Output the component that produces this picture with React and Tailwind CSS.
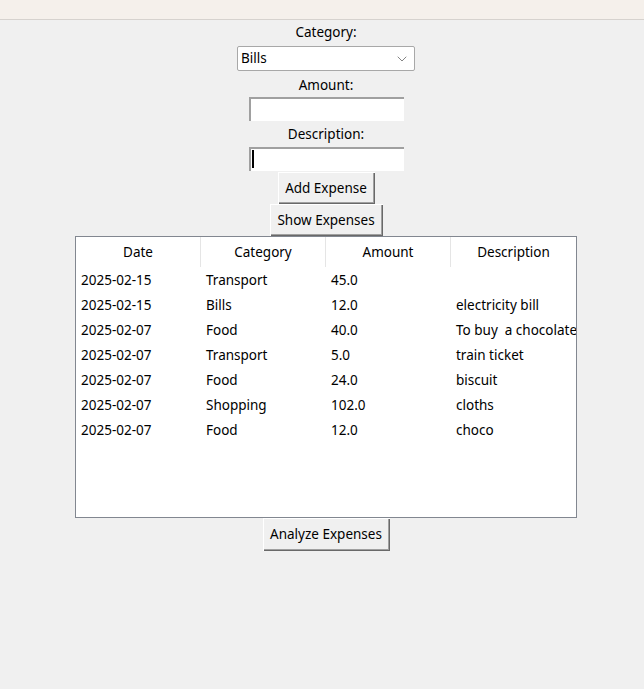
import { ChevronDown } from "lucide-react";

const rows = [
  ["2025-02-15", "Transport", "45.0", ""],
  ["2025-02-15", "Bills", "12.0", "electricity bill"],
  ["2025-02-07", "Food", "40.0", "To buy  a chocolate"],
  ["2025-02-07", "Transport", "5.0", "train ticket"],
  ["2025-02-07", "Food", "24.0", "biscuit"],
  ["2025-02-07", "Shopping", "102.0", "cloths"],
  ["2025-02-07", "Food", "12.0", "choco"],
];

const raised =
  "bg-[#f0f0f0] shadow-[inset_1px_1px_0_#ffffff,inset_-1px_-1px_0_#696969,inset_-2px_-2px_0_#a0a0a0] text-[13.5px] text-black";

function Entry({ caret }) {
  return (
    <div className="relative h-[24px] w-[155px] bg-white border-t-2 border-l-2 border-[#a0a0a0] border-r-0 border-b-0">
      {caret && <div className="absolute left-[1px] top-[1px] h-[18px] w-[2px] bg-black" />}
    </div>
  );
}

export default function App() {
  return (
    <div
      className="h-[689px] w-[644px] overflow-hidden bg-[#f0f0f0] text-black"
      style={{ fontFamily: '"Noto Sans", "Open Sans", sans-serif' }}
    >
      {/* window title strip */}
      <div className="h-[20px] bg-[#f5f0eb] border-b border-[#d6d2ce]" />

      <div className="flex flex-col items-center pl-[8px]">
        <div className="mt-[2px] h-[20px] leading-[20px] text-[13.5px]">Category:</div>
        <div className="mt-[4px] flex h-[25px] w-[178px] items-center justify-between rounded-[2px] border border-[#a8a8a8] bg-white pl-[3px] pr-[4px] text-[13.5px]">
          <span>Bills</span>
          <ChevronDown size={16} strokeWidth={1.3} className="text-[#707070]" />
        </div>

        <div className="mt-[4px] h-[20px] leading-[20px] text-[13.5px]">Amount:</div>
        <div className="mt-[2px]">
          <Entry />
        </div>

        <div className="mt-[3px] h-[20px] leading-[20px] text-[13.5px]">Description:</div>
        <div className="mt-[3px]">
          <Entry caret />
        </div>

        <button className={`mt-[1px] h-[32px] w-[97px] ${raised}`}>Add Expense</button>
        <button className={`h-[32px] w-[113px] ${raised}`}>Show Expenses</button>

        {/* treeview */}
        <div className="h-[282px] w-[502px] overflow-hidden border border-[#828790] bg-white text-[13.5px]">
          <div className="grid h-[30px] grid-cols-[124px_125px_125px_126px]">
            {["Date", "Category", "Amount", "Description"].map((h, i) => (
              <div
                key={h}
                className={`flex items-center justify-center ${i > 0 ? "border-l border-[#e5e5e5]" : ""}`}
              >
                {h}
              </div>
            ))}
          </div>
          <div className="pt-[1px]">
            {rows.map((r, i) => (
              <div key={i} className="grid h-[25px] grid-cols-[125px_125px_125px_125px] items-center">
                {r.map((c, j) => (
                  <div key={j} className="overflow-hidden whitespace-pre pl-[5px]">
                    {c}
                  </div>
                ))}
              </div>
            ))}
          </div>
        </div>

        <button className={`h-[33px] w-[127px] ${raised}`}>Analyze Expenses</button>
      </div>
    </div>
  );
}
